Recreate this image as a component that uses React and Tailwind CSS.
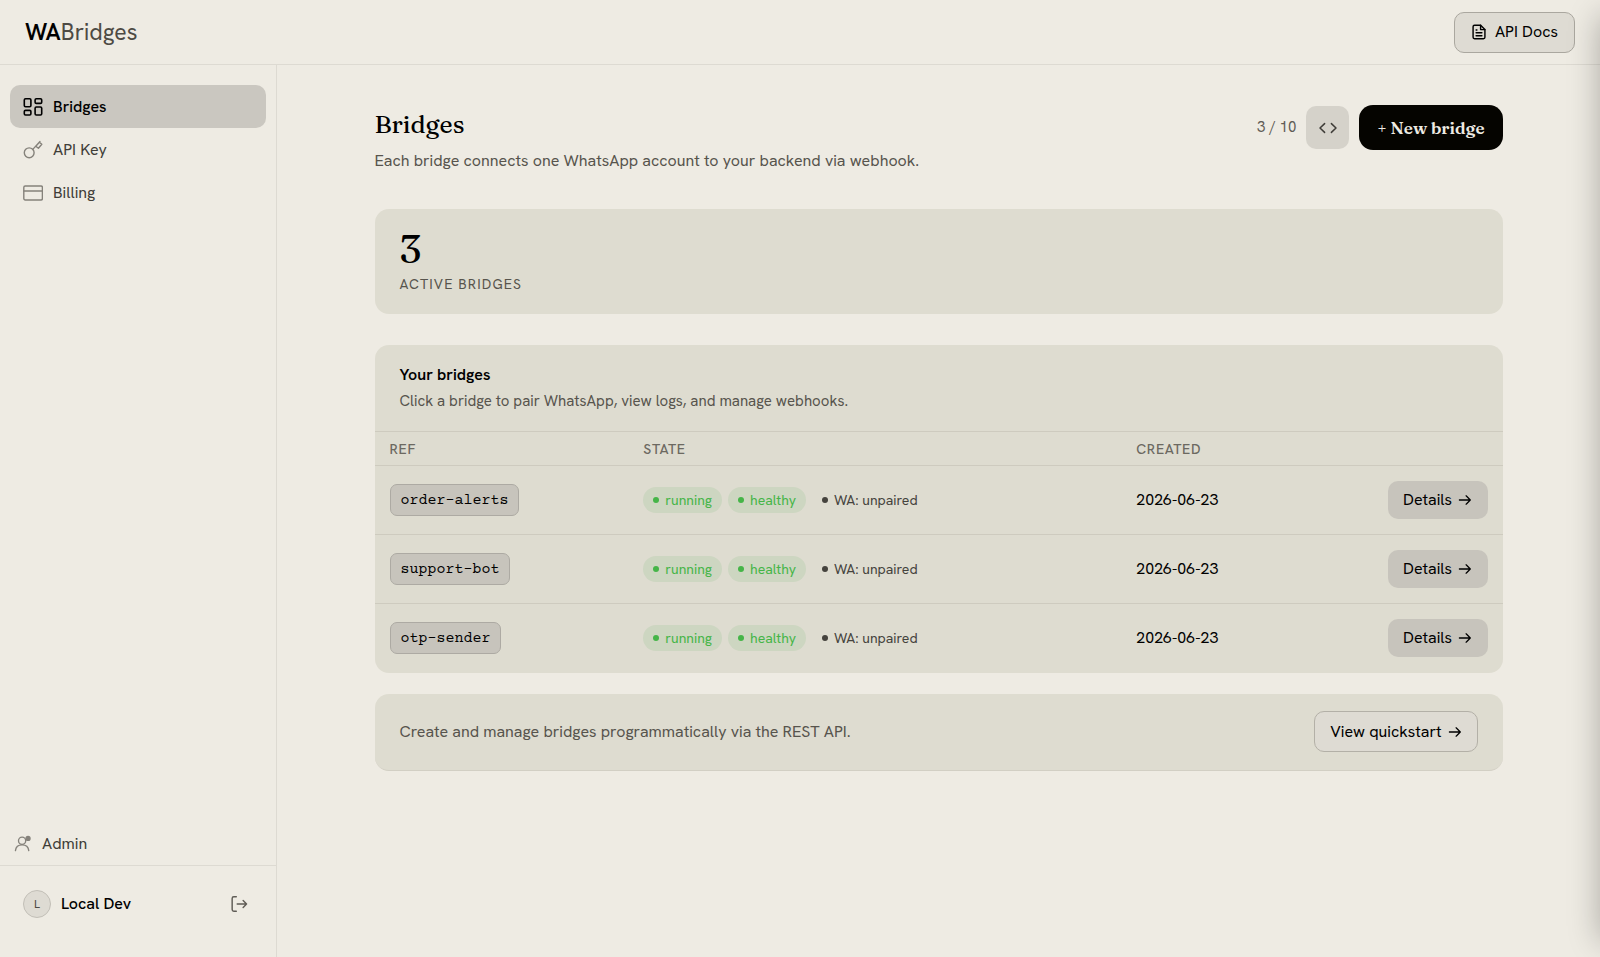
import React from 'react'

const bridges = [
  { ref: 'order-alerts', created: '2026-06-23' },
  { ref: 'support-bot', created: '2026-06-23' },
  { ref: 'otp-sender', created: '2026-06-23' },
]

const Stroke = ({ size = 20, width = 1.5, className = '', children }) => (
  <svg
    width={size}
    height={size}
    viewBox="0 0 20 20"
    fill="none"
    stroke="currentColor"
    strokeWidth={width}
    strokeLinecap="round"
    strokeLinejoin="round"
    className={`shrink-0 ${className}`}
    aria-hidden="true"
  >
    {children}
  </svg>
)

const BridgesIcon = () => (
  <Stroke width={1.6}>
    <rect x="1.3" y="1.8" width="6.6" height="8" rx="1.2" />
    <rect x="12.1" y="1.8" width="6.6" height="4.6" rx="1.2" />
    <rect x="1.3" y="13.4" width="6.6" height="4.6" rx="1.2" />
    <rect x="12.1" y="10" width="6.6" height="8" rx="1.2" />
  </Stroke>
)

const KeyIcon = () => (
  <Stroke width={1.4} className="text-[#85827b]">
    <circle cx="6.2" cy="12.8" r="4.9" />
    <path d="M9.8 9.4 17 1.4M18.8 4.2 15.4 8.2 12.8 6.2 16.4 2.2z" />
  </Stroke>
)

const CardIcon = () => (
  <Stroke width={1.4} className="text-[#85827b]">
    <rect x="0.8" y="3" width="18.6" height="14" rx="1.4" />
    <path d="M1 8h18.2" />
  </Stroke>
)

const AdminIcon = () => (
  <Stroke size={18} width={1.5} className="text-[#85827b]">
    <circle cx="9" cy="6.4" r="4" />
    <path d="M1.6 17.4c.4-3.8 3.4-6.4 7.4-6.4s7 2.6 7.4 6.4" />
    <circle cx="15.6" cy="3.8" r="2.2" fill="currentColor" />
  </Stroke>
)

const LogoutIcon = () => (
  <Stroke size={18} width={1.6}>
    <path d="M7 2H4.2C3 2 2.4 2.6 2.4 3.8v12.4C2.4 17.4 3 18 4.2 18H7" />
    <path d="M8 10h10.4M14.6 6.2 18.4 10l-3.8 3.8" />
  </Stroke>
)

const DocIcon = () => (
  <Stroke size={16} width={1.8}>
    <path d="M12 1.6H4.4c-1.2 0-1.8.6-1.8 1.8v13.2c0 1.2.6 1.8 1.8 1.8h11.2c1.2 0 1.8-.6 1.8-1.8V7z" />
    <path d="M12 1.6V7h5.4M6.4 7.4h1M6.4 11h7.2M6.4 14.6h7.2" />
  </Stroke>
)

const CodeIcon = () => (
  <Stroke size={20} width={1.5}>
    <path d="M6.6 5.6 2 10l4.6 4.4M13.4 5.6 18 10l-4.6 4.4" />
  </Stroke>
)

const Arrow = () => (
  <Stroke size={14} width={1.8}>
    <path d="M2 10h15.6M11.6 4l6 6-6 6" />
  </Stroke>
)

const NavItem = ({ icon, label, active }) => (
  <a
    href="#"
    aria-current={active ? 'page' : undefined}
    className={`flex h-[43px] items-center gap-[10px] rounded-[10px] px-[13px] ${
      active ? 'bg-[#cac7c0] font-medium text-black' : 'text-[#3f3d38]'
    }`}
  >
    {icon}
    {label}
  </a>
)

const Pill = ({ children }) => (
  <span className="flex h-[26px] items-center gap-[6px] rounded-full bg-[#cdd6c1] px-[10px] text-[#45b548]">
    <span className="size-[6px] rounded-full bg-current" />
    {children}
  </span>
)

const App = () => {
  return (
    <div className="flex min-h-screen flex-col bg-[#eeebe3] font-['Hanken_Grotesk','Inter',sans-serif] text-base text-black">
      {/* Top bar */}
      <header className="flex h-[65px] items-center justify-between border-b border-[#dddad2] px-[25px]">
        <a href="#" className="text-[23px]">
          <span className="font-semibold">WA</span>
          <span className="text-[#4d4a44]">Bridges</span>
        </a>
        <a
          href="#"
          className="flex h-[41px] items-center gap-2 rounded-[10px] border border-[#aaa79f] bg-[#dedbd3] px-4"
        >
          <DocIcon />
          API Docs
        </a>
      </header>

      <div className="flex flex-1">
        {/* Sidebar */}
        <aside className="flex w-[277px] shrink-0 flex-col border-r border-[#dddad2]">
          <nav className="flex flex-col px-[10px] pt-5">
            <NavItem icon={<BridgesIcon />} label="Bridges" active />
            <NavItem icon={<KeyIcon />} label="API Key" />
            <NavItem icon={<CardIcon />} label="Billing" />
          </nav>
          <a href="#" className="mt-auto flex h-[42px] items-center gap-[10px] px-[14px] text-[#3f3d38]">
            <AdminIcon />
            Admin
          </a>
          <div className="flex h-[92px] items-center border-t border-[#dddad2] px-[23px] pb-4">
            <span className="flex size-[28px] items-center justify-center rounded-full border border-[#c2bfb7] bg-[#dedbd3] text-xs text-[#4d4a44]">
              L
            </span>
            <span className="ml-[10px] font-medium">Local Dev</span>
            <button type="button" aria-label="Log out" className="ml-auto mr-[5px] text-[#5f5c56]">
              <LogoutIcon />
            </button>
          </div>
        </aside>

        {/* Content */}
        <main className="flex-1 px-12 pt-[40px]">
          <div className="mx-auto flex max-w-[1128px] flex-col">
            <div className="flex items-start justify-between">
              <div>
                <h1 className="font-['Fraunces','Liberation_Serif',serif] text-[25px] leading-[38px] font-medium">Bridges</h1>
                <p className="mt-[6px] text-[#57544d]">
                  Each bridge connects one WhatsApp account to your backend via webhook.
                </p>
              </div>
              <div className="flex items-center gap-[10px]">
                <span className="text-[15px] text-[#5f5c56]">3 / 10</span>
                <button
                  type="button"
                  aria-label="Show code"
                  className="flex size-[43px] items-center justify-center rounded-[10px] bg-[#d5d2ca] text-[#3f3d38]"
                >
                  <CodeIcon />
                </button>
                <button
                  type="button"
                  className="h-[45px] rounded-[14px] bg-[#050400] px-[18px] font-['Fraunces','Liberation_Serif',serif] text-[17px] font-semibold text-[#eeebe3]"
                >
                  <span className="font-normal">+</span> New bridge
                </button>
              </div>
            </div>

            <section className="mt-[36px] h-[105px] rounded-[14px] bg-[#dedcd0] px-[25px] pt-[18px]">
              <div className="font-['Fraunces','Liberation_Serif',serif] text-[40px] leading-[44px] font-medium">3</div>
              <div className="mt-[3px] text-sm tracking-[0.08em] text-[#57544d]">ACTIVE BRIDGES</div>
            </section>

            <section className="mt-[31px] overflow-hidden rounded-[14px] bg-[#dedcd0]">
              <div className="px-[25px] py-[17px]">
                <h2 className="font-semibold leading-[26px]">Your bridges</h2>
                <p className="text-[15px] leading-[26px] text-[#57544d]">
                  Click a bridge to pair WhatsApp, view logs, and manage webhooks.
                </p>
              </div>
              <table className="w-full table-fixed border-collapse text-left">
                <thead>
                  <tr className="h-[34px] border-y border-[#cecbbf] text-sm tracking-wider text-[#6c6961]">
                    <th scope="col" className="w-[22.5%] px-[15px] font-medium">REF</th>
                    <th scope="col" className="w-[43.7%] px-[15px] font-medium">STATE</th>
                    <th scope="col" className="px-[15px] font-medium">CREATED</th>
                    <th scope="col" className="w-[130px] px-[15px]" aria-label="Actions"></th>
                  </tr>
                </thead>
                <tbody>
                  {bridges.map((b) => (
                    <tr key={b.ref} className="h-[69px] border-t border-[#cecbbf]">
                      <td className="px-[15px]">
                        <span className="inline-flex h-[32px] items-center rounded-[7px] border border-[#adaaa3] bg-[#c7c4bc] px-[10px] pt-[2px] align-middle font-['Courier_Prime','Liberation_Mono',monospace] text-[15px]">
                          {b.ref}
                        </span>
                      </td>
                      <td className="px-[15px]">
                        <div className="flex items-center gap-[6px] text-sm">
                          <Pill>running</Pill>
                          <Pill>healthy</Pill>
                          <span className="flex h-[26px] items-center gap-[6px] px-[10px] text-[#45433d]">
                            <span className="size-[6px] rounded-full bg-current" />
                            WA: unpaired
                          </span>
                        </div>
                      </td>
                      <td className="px-[15px]">{b.created}</td>
                      <td className="px-[15px]">
                        <a
                          href="#"
                          className="flex h-[38px] items-center justify-center gap-[6px] rounded-[10px] bg-[#c7c4bc]"
                        >
                          Details
                          <Arrow />
                        </a>
                      </td>
                    </tr>
                  ))}
                </tbody>
              </table>
            </section>

            <section className="mt-[21px] flex h-[77px] items-center justify-between rounded-[14px] border-b border-[#d2cfc4] bg-[#dedcd0] px-[25px]">
              <p className="text-[#57544d]">Create and manage bridges programmatically via the REST API.</p>
              <a
                href="#"
                className="flex h-[41px] items-center gap-[6px] rounded-[10px] border border-[#b3b0a7] bg-[#dedbd3] px-[15px]"
              >
                View quickstart
                <Arrow />
              </a>
            </section>
          </div>
        </main>
      </div>

      {/* Soft shade along the window's right edge */}
      <div className="pointer-events-none fixed inset-y-4 left-full w-10 shadow-[0_0_32px_rgba(0,0,0,0.28)]" />
    </div>
  )
}

export default App
